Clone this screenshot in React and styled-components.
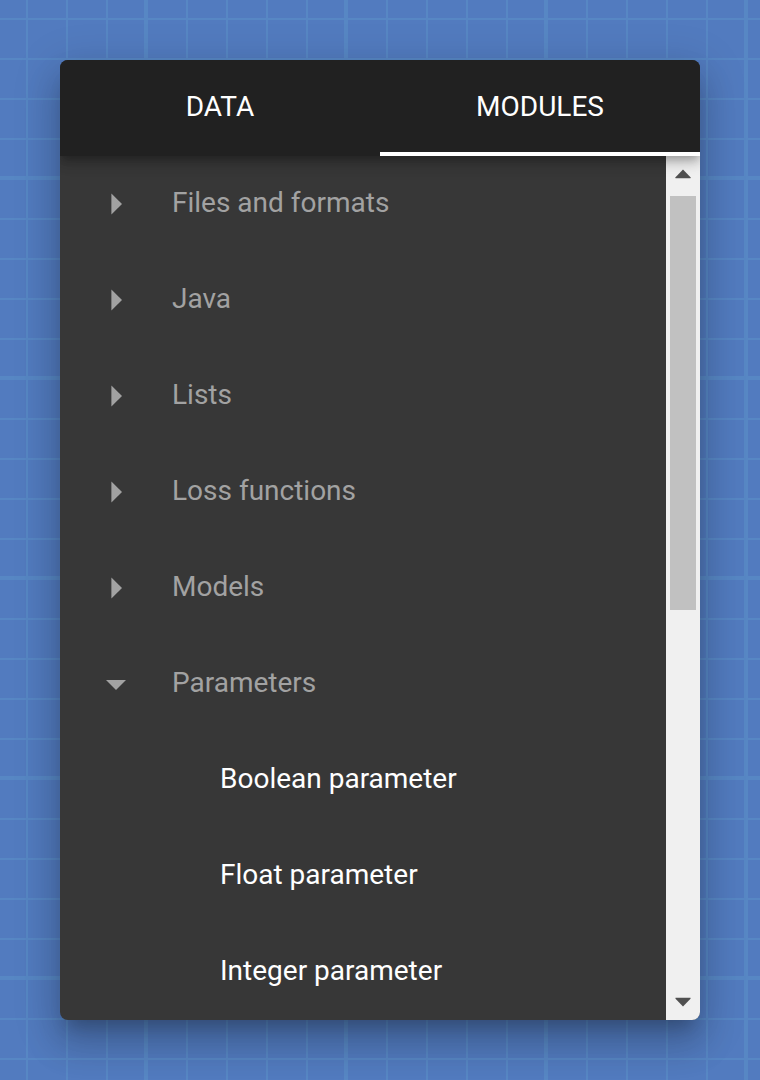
import React, { useState } from "react";
import styled, { createGlobalStyle } from "styled-components";

const GlobalStyle = createGlobalStyle`
  *, *::before, *::after { box-sizing: border-box; }
  body {
    margin: 0;
    font-family: Roboto, "Liberation Sans", sans-serif;
    font-size: 28px;
    line-height: 40px;
  }
  button { font: inherit; border: 0; margin: 0; padding: 0; background: none; cursor: pointer; }
`;

const line = "#5787c4";

const Canvas = styled.main`
  min-height: 100vh;
  padding: 60px;
  display: flex;
  background-color: #527bbf;
  background-image:
    linear-gradient(to right, ${line} 4px, transparent 4px),
    linear-gradient(to bottom, ${line} 4px, transparent 4px),
    linear-gradient(to right, ${line} 2px, transparent 2px),
    linear-gradient(to bottom, ${line} 2px, transparent 2px);
  background-size: 200px 200px, 200px 200px, 40px 40px, 40px 40px;
  background-position: 144px 0, 0 176px, 26px 0, 0 18px;
`;

const Panel = styled.section`
  flex: 1;
  min-width: 0;
  display: flex;
  flex-direction: column;
  overflow: hidden;
  border-radius: 8px;
  background: #373737;
  box-shadow:
    0 14px 16px -8px rgba(0, 0, 0, 0.2),
    0 24px 34px 4px rgba(0, 0, 0, 0.14),
    0 10px 44px 8px rgba(0, 0, 0, 0.12);
`;

const TabBar = styled.div`
  position: relative;
  z-index: 1;
  display: flex;
  background: #212121;
  box-shadow:
    0 4px 8px -2px rgba(0, 0, 0, 0.2),
    0 8px 10px 0 rgba(0, 0, 0, 0.14),
    0 2px 20px 0 rgba(0, 0, 0, 0.12);
`;

const Tab = styled.button`
  flex: 1;
  height: 96px;
  padding-top: 2px;
  border-bottom: 4px solid ${(p) => (p.$active ? "#fff" : "transparent")};
  color: #fff;
`;

const Body = styled.div`
  flex: 1;
  display: flex;
`;

const List = styled.ul`
  flex: 1;
  min-width: 0;
  margin: 0;
  padding: 0;
  list-style: none;
`;

const Group = styled.button`
  width: 100%;
  height: 96px;
  padding: 0 32px;
  display: flex;
  align-items: center;
  gap: 32px;
  color: #a2a2a2;
  text-align: left;
`;

const Arrow = styled.svg`
  width: 48px;
  height: 48px;
  flex: none;
  fill: currentColor;
`;

const Label = styled.span`
  padding-bottom: 2px;
`;

const Module = styled.button`
  width: 100%;
  height: 96px;
  padding: 0 32px 2px 160px;
  color: #fff;
  text-align: left;
`;

const Scrollbar = styled.div`
  width: 34px;
  flex: none;
  display: flex;
  flex-direction: column;
  background: #f0f0f0;
`;

const ScrollButton = styled.button`
  height: 36px;
  display: flex;
  justify-content: center;
  align-items: center;
  color: #505050;

  svg { width: 16px; height: 10px; fill: currentColor; }
`;

const Track = styled.div`
  flex: 1;
  margin-top: 4px;
  padding: 0 4px;
`;

const Thumb = styled.div`
  height: ${(p) => p.$share}%;
  background: #c1c1c1;
`;

const groups = [
  { name: "Files and formats" },
  { name: "Java" },
  { name: "Lists" },
  { name: "Loss functions" },
  { name: "Models" },
  { name: "Parameters", modules: ["Boolean parameter", "Float parameter", "Integer parameter"] },
];

export default function App() {
  const [tab, setTab] = useState("MODULES");
  const [open, setOpen] = useState("Parameters");

  return (
    <>
      <GlobalStyle />
      <Canvas>
        <Panel>
          <TabBar role="tablist">
            {["DATA", "MODULES"].map((name) => (
              <Tab key={name} role="tab" aria-selected={tab === name} $active={tab === name} onClick={() => setTab(name)}>
                {name}
              </Tab>
            ))}
          </TabBar>
          <Body>
            <List>
              {groups.map(({ name, modules }) => {
                const expanded = open === name;
                return (
                  <li key={name}>
                    <Group aria-expanded={expanded} onClick={() => setOpen(expanded ? null : name)}>
                      <Arrow viewBox="0 0 24 24" aria-hidden="true">
                        <path d={expanded ? "M7 10l5 5 5-5z" : "M9.7 17.2l5.3-5.2-5.3-5.2z"} />
                      </Arrow>
                      <Label>{name}</Label>
                    </Group>
                    {expanded && modules && (
                      <List>
                        {modules.map((module) => (
                          <li key={module}>
                            <Module>{module}</Module>
                          </li>
                        ))}
                      </List>
                    )}
                  </li>
                );
              })}
            </List>
            <Scrollbar>
              <ScrollButton aria-label="Scroll up">
                <svg viewBox="0 0 16 10" aria-hidden="true"><path d="M0.5 9.2V8.2L8 0.5L15.5 8.2V9.2z" /></svg>
              </ScrollButton>
              <Track>
                <Thumb $share={52.5} />
              </Track>
              <ScrollButton aria-label="Scroll down">
                <svg viewBox="0 0 16 10" aria-hidden="true"><path d="M0.5 0.8V1.8L8 9.5L15.5 1.8V0.8z" /></svg>
              </ScrollButton>
            </Scrollbar>
          </Body>
        </Panel>
      </Canvas>
    </>
  );
}
